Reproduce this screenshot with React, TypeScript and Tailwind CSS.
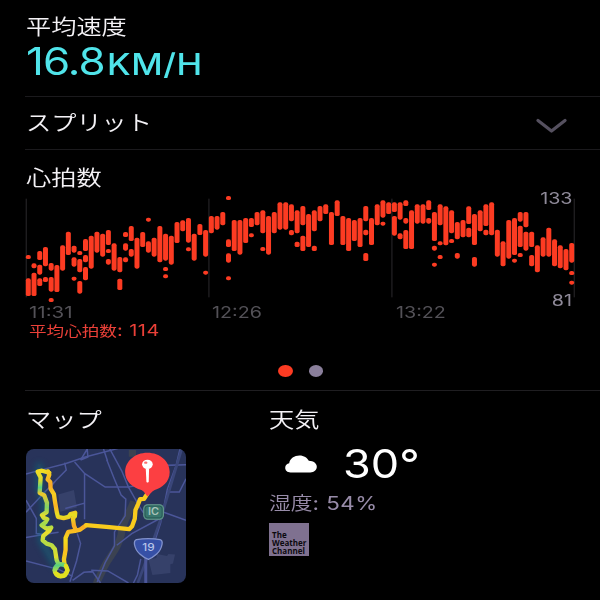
import type { ReactNode } from "react";

// Each entry is one time slot; a slot holds [top, bottom] ranges in chart units.
const HEART_RATE: [number, number][][] = [
  [[195, 207], [265, 318]],
  [[220, 235], [248, 318]],
  [[183, 210], [224, 254], [265, 288]],
  [[171, 229], [261, 276]],
  [[219, 242], [261, 305], [324, 336]],
  [[225, 306]],
  [[166, 242]],
  [[125, 195]],
  [[167, 188], [202, 230], [260, 272]],
  [[183, 195], [207, 247], [273, 311]],
  [[147, 183], [195, 217], [231, 271]],
  [[137, 236]],
  [[125, 188]],
  [[131, 200]],
  [[120, 165], [177, 189], [207, 224]],
  [[160, 242]],
  [[201, 247], [266, 300]],
  [[126, 141], [160, 182], [202, 217]],
  [[108, 153], [177, 200]],
  [[143, 236]],
  [[126, 171]],
  [[83, 95], [154, 188]],
  [[143, 200]],
  [[108, 217]],
  [[131, 212], [231, 243], [253, 265]],
  [[137, 224]],
  [[96, 159]],
  [[91, 124]],
  [[84, 158], [172, 184]],
  [[131, 212]],
  [[102, 135]],
  [[120, 200], [242, 254]],
  [[78, 130]],
  [[78, 119]],
  [[66, 106]],
  [[18, 30], [148, 171], [190, 218], [259, 271]],
  [[90, 183]],
  [[90, 194]],
  [[84, 159]],
  [[84, 111], [130, 142]],
  [[66, 106]],
  [[61, 130], [171, 183]],
  [[78, 194]],
  [[66, 130]],
  [[37, 119]],
  [[37, 119]],
  [[43, 94], [120, 136]],
  [[61, 130], [155, 171]],
  [[48, 106], [137, 183]],
  [[72, 171]],
  [[61, 124], [167, 183]],
  [[48, 94]],
  [[43, 72]],
  [[66, 165]],
  [[31, 78]],
  [[78, 165]],
  [[84, 183]],
  [[90, 153]],
  [[84, 171]],
  [[48, 94], [119, 136], [189, 213]],
  [[84, 165]],
  [[43, 106]],
  [[31, 83], [95, 107]],
  [[37, 72]],
  [[37, 66], [78, 137]],
  [[37, 89], [130, 148]],
  [[31, 48], [84, 101], [120, 177]],
  [[61, 177]],
  [[43, 101]],
  [[43, 101]],
  [[31, 60], [84, 101]],
  [[66, 153], [167, 182], [218, 230]],
  [[43, 106], [154, 166], [195, 207]],
  [[49, 166]],
  [[61, 130], [147, 159]],
  [[96, 148], [189, 206]],
  [[90, 142]],
  [[49, 102], [113, 142]],
  [[72, 165], [201, 230]],
  [[61, 124]],
  [[43, 108], [119, 136]],
  [[37, 136]],
  [[119, 200]],
  [[154, 229]],
  [[90, 206]],
  [[84, 195], [206, 218]],
  [[66, 95], [107, 171], [189, 201]],
  [[66, 112], [125, 182]],
  [[125, 171], [195, 229]],
  [[166, 247]],
  [[142, 200]],
  [[113, 200]],
  [[148, 229]],
  [[166, 235]],
  [[177, 241]],
  [[159, 218], [243, 255], [272, 284]],
];

const GRID_LINES = [19, 567, 1116, 1663];

function Heading({ children }: { children: ReactNode }) {
  return (
    <h2 className="ml-px w-max origin-left scale-x-[1.2] text-[21px] leading-[24px] font-[350] text-[#f4f2f6]">
      {children}
    </h2>
  );
}

function HeartRateChart() {
  return (
    <svg className="block h-[120px] w-[575px]" viewBox="15 0 1725 360" aria-hidden>
      {GRID_LINES.map((x) => (
        <rect key={x} x={x - 2} y="26" width="3.5" height="296" fill="#242326" />
      ))}
      {HEART_RATE.map((ranges, i) =>
        ranges.map(([top, bottom]) => (
          <rect
            key={`${i}-${top}`}
            x={17.4 + i * 17.16}
            y={top}
            width="15"
            height={bottom - top}
            rx="6"
            ry="5.5"
            fill="#fc3b22"
          />
        )),
      )}
    </svg>
  );
}

function RouteMap() {
  return (
    <svg
      className="block h-[134px] w-[160px] rounded-[8px]"
      viewBox="32 27 481 401"
      preserveAspectRatio="none"
      aria-label="ルート"
    >
      <defs>
        <linearGradient id="west" gradientUnits="userSpaceOnUse" x1="0" y1="90" x2="0" y2="400">
          <stop offset="0" stopColor="#f3dc22" />
          <stop offset="0.1" stopColor="#d5dc32" />
          <stop offset="0.17" stopColor="#58d184" />
          <stop offset="0.23" stopColor="#f0c82a" />
          <stop offset="0.36" stopColor="#7ed468" />
          <stop offset="0.44" stopColor="#e6de2e" />
          <stop offset="0.52" stopColor="#9edb50" />
          <stop offset="0.6" stopColor="#ecdf2a" />
          <stop offset="0.7" stopColor="#b5dc46" />
          <stop offset="0.84" stopColor="#e0df2e" />
          <stop offset="0.92" stopColor="#56cf80" />
          <stop offset="1" stopColor="#d9e02c" />
        </linearGradient>
        <linearGradient id="east" gradientUnits="userSpaceOnUse" x1="0" y1="90" x2="0" y2="410">
          <stop offset="0" stopColor="#f4d51e" />
          <stop offset="0.14" stopColor="#fba827" />
          <stop offset="0.22" stopColor="#f6cf20" />
          <stop offset="0.34" stopColor="#fbb423" />
          <stop offset="0.42" stopColor="#e6e022" />
          <stop offset="0.52" stopColor="#fba924" />
          <stop offset="0.66" stopColor="#f5dc1c" />
          <stop offset="0.76" stopColor="#fbc01f" />
          <stop offset="1" stopColor="#dfe022" />
        </linearGradient>
        <filter id="glow" x="-50%" y="-50%" width="200%" height="200%">
          <feGaussianBlur stdDeviation="9" />
        </filter>
      </defs>
      <rect x="32" y="27" width="481" height="401" fill="#28335a" />

      {/* blocks, river */}
      <path d="M129 163l47-13 9 52-50 13z" fill="#36416a" />
      <path d="M400 358l24-5 2-12 30 6 4-6 20 2-6 27-8 2v26l-54 6z" fill="#36416a" />
      <path
        d="M352 30v20M356 184c-14 40-35 60-38 100-12 50-34 60-52 98-8 20-18 34-22 48"
        fill="none"
        stroke="#3b4251"
        strokeWidth="22"
      />

      {/* streets */}
      <g fill="none" stroke="#4b5699" strokeWidth="4.5">
        <path d="M32 102l40-11 78-20 60-20 100-26" />
        <path d="M148 68l5 22-32 32-18 22M121 122l-42 44-47 50M196 60l20-33M216 27l2 24-22 9" />
        <path d="M178 66l30 34 62 41h70l40-8M208 100v137M150 205l58-16" />
        <path d="M275 60l22 55 21 50 14 12-2 50-32 48v42l-28 50-24 58" />
        <path d="M284 27l36 66 20 48 34 60 12 18M265 27l12 36" />
        <path d="M495 27l-12 50-26 70-20 100-16 50M457 156h36l20-40M450 76l63-2" />
        <path d="M440 214l73 26M440 232l-90 48-45 35" />
        <path d="M32 292l58-10 40-6M32 180l31 55v45l27 3M32 362l100 26 40 20" />
        <path d="M186 280l10 30-12 52-20 62" />
        <path d="M172 420l34-24 26-2 24 34M228 390l50 2 62 36M377 356l-10 48-12 24" />
      </g>
      <path d="M500 27l-62 206-42 120-28 75" fill="none" stroke="#3a4679" strokeWidth="8" />
      <path d="M392 352v76" stroke="#4b5699" strokeWidth="9" />

      {/* route */}
      <path
        d="M72 70v80l16 30v60l-10 60 46 80"
        fill="none"
        stroke="#087c85"
        strokeWidth="18"
        opacity="0.5"
        filter="url(#glow)"
      />
      <g fill="none" strokeWidth="13" strokeLinecap="round" strokeLinejoin="round">
        <path
          d="M102 98L80 92 67 95l9 17-3 46 14 8 8 22-1 28-14 9 5 8 11 4-6 10-11 8 14 10 15-3-5 9-19 16-2 13 12 10 15 5 10 12 5 32 6 14-11 16"
          stroke="url(#west)"
        />
        <path
          d="M98 94l4 10-5 14 8 8 1 20 10 16 3 22 6 34 3 12 17 4 15-4 6-8 14-4-1 10-6 6 3 22 5 12"
          stroke="url(#east)"
        />
        <path d="M213 255l-18 13-16 4-20 3-8 18v36l-5 28 2 17" stroke="url(#east)" />
        <path d="M396 162l-9 14-12 1-6 15-8 18-2 26-8 22-9 9-60-6-69-6" stroke="#f9cb1d" />
        <ellipse cx="137" cy="390" rx="19" ry="18" stroke="url(#west)" />
        <path d="M152 376l5 14-9 15-14 2-11-7" stroke="#e2e01f" />
      </g>

      {/* road signs */}
      <rect x="386" y="194" width="59" height="43" rx="11" fill="#39776d" stroke="#6a9c90" strokeWidth="3" />
      <rect x="390" y="198" width="51" height="35" rx="8" fill="none" stroke="#244f50" strokeWidth="2" />
      <text x="415" y="226" textAnchor="middle" fontSize="29" fontWeight="600" fill="#a9c3ba" textLength="33" lengthAdjust="spacingAndGlyphs">
        IC
      </text>
      <path
        d="M364 298q36-6 71 0 8 2 6 14-3 18-17 30-11 10-24 15-14-5-25-15-14-12-17-30-1-12 6-14z"
        fill="#3650a6"
        stroke="#8292cc"
        strokeWidth="4"
      />
      <text x="400" y="333" textAnchor="middle" fontSize="30" fontWeight="500" fill="#b7c4e8" textLength="37" lengthAdjust="spacingAndGlyphs">
        19
      </text>

      {/* pin */}
      <path
        d="M397 38c38 0 67 26 67 58 0 31-24 47-45 54-9 4-14 14-22 19-6-5-9-15-18-19-26-7-49-25-49-54 0-32 29-58 67-58z"
        fill="#fc3f42"
      />
      <ellipse cx="397" cy="73" rx="16" ry="14" fill="#fff" />
      <ellipse cx="392" cy="68" rx="5" ry="3.5" fill="#fc3f42" opacity="0.75" />
      <path d="M392 85h10l-1 40q-4 5-7 0z" fill="#fff" />
    </svg>
  );
}

export default function App() {
  return (
    <main className="h-[600px] w-[600px] overflow-hidden bg-black pl-[25px] font-['Inter','Noto_Sans_CJK_JP',sans-serif]">
      <section className="h-[97px] border-b border-[#1b1a1d] pt-[15px]">
        <Heading>平均速度</Heading>
        <p className="ml-px flex w-max origin-left scale-x-[1.17] items-baseline text-[37.5px] leading-[45px] font-normal tracking-[-0.8px] text-[#50e4ea]">
          16.8<span className="ml-[2px] text-[29.5px] font-medium tracking-[0.4px]">KM/H</span>
        </p>
      </section>

      <section className="flex h-[53px] items-center justify-between border-b border-[#1b1a1d] pr-[33px]">
        <Heading>スプリット</Heading>
        <svg className="mt-1.5 h-[16px] w-[32px]" viewBox="0 0 32 16" fill="none" aria-hidden>
          <path d="M3 2.5L16.5 13 30 2.5" stroke="#55505f" strokeWidth="3.2" strokeLinecap="round" strokeLinejoin="round" />
        </svg>
      </section>

      <section className="flex h-[241px] flex-col border-b border-[#1f1e21] pt-[16px]">
        <Heading>心拍数</Heading>
        <div className="relative h-[113px]">
          <HeartRateChart />
          <span className="absolute top-0 right-[28px] origin-right scale-x-[1.27] text-[15.5px] leading-[18px] text-[#8f8a99]">133</span>
          <span className="absolute top-[102px] right-[28px] origin-right scale-x-[1.27] text-[15.5px] leading-[18px] text-[#8f8a99]">81</span>
        </div>
        <div className="grid grid-cols-3 pr-[21px] pl-[4px] text-[16px] leading-[19px] text-[#535157]">
          <span className="w-max origin-left scale-x-[1.28]">11:31</span>
          <span className="w-max origin-left scale-x-[1.23]">12:26</span>
          <span className="w-max origin-left scale-x-[1.23]">13:22</span>
        </div>
        <p className="ml-[4px] flex h-[17px] w-max origin-left scale-x-[1.24] items-baseline text-[14.2px] leading-[17px] text-[#ea4038]">
          平均心拍数<span className="text-[16px] tracking-[0.4px]">: 114</span>
        </p>
        <div className="mt-[26px] flex gap-[16px] pl-[253px]">
          <span className="h-[12px] w-[14.5px] rounded-[50%] bg-[#fc3b22]" />
          <span className="h-[12px] w-[14.5px] rounded-[50%] bg-[#8a7f9b]" />
        </div>
      </section>

      <section className="flex pt-[17px]">
        <div className="w-[243px]">
          <Heading>マップ</Heading>
          <div className="mt-[17px] pl-[1px]">
            <RouteMap />
          </div>
        </div>
        <div>
          <Heading>天気</Heading>
          <div className="mt-[9px] flex h-[46px] items-center pl-[17px]">
            <svg className="h-[18px] w-[32px]" viewBox="0 0 32 18" aria-hidden>
              <path
                d="M5.5 17.5C2.2 17.5.2 15.4.2 12.8.2 10.4 2 8.9 4.2 8.3 4.8 3.5 9.500.5 14.500.5c4.500 0 7.800 2.300 9.300 5.300 4.800.1 8 2.600 8 6 0 3.300-2.800 5.700-6.500 5.700z"
                fill="#fff"
              />
            </svg>
            <span className="ml-[26px] origin-left scale-x-[1.14] text-[39.5px] leading-[46px] font-normal text-white">30°</span>
          </div>
          <p className="ml-px flex h-[32px] w-max origin-left scale-x-[1.21] items-baseline text-[18px] leading-[32px] font-[350] text-[#988ca9]">
            湿度<span className="text-[18.5px] font-normal tracking-[0.4px]">: 54%</span>
          </p>
          <div className="mt-[4px] ml-px flex h-[33px] w-[40px] flex-col bg-[#7f7190] pt-[8px] pl-[3px] font-['Open_Sans',sans-serif] text-[8px] leading-[8px] font-bold text-[#0b090e]">
            <p className="w-max">The</p>
            <p className="w-max">Weather</p>
            <p className="w-max">Channel</p>
          </div>
        </div>
      </section>
    </main>
  );
}
